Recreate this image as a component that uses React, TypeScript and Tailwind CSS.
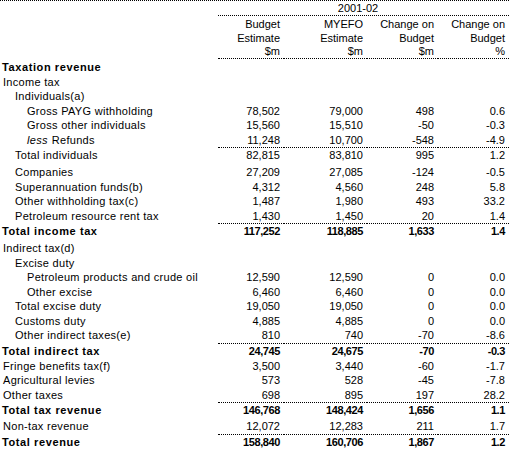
import React from "react";

type Row = {
  label: string;
  less?: boolean;
  indent?: 0 | 1 | 2;
  bold?: boolean;
  vals?: string[];
  line?: boolean;
  after?: string;
};

const rows: Row[] = [
  { label: "Taxation revenue", bold: true },
  { label: "Income tax" },
  { label: "Individuals(a)", indent: 1 },
  { label: "Gross PAYG withholding", indent: 2, vals: ["78,502", "79,000", "498", "0.6"] },
  { label: "Gross other individuals", indent: 2, vals: ["15,560", "15,510", "-50", "-0.3"] },
  { label: "Refunds", less: true, indent: 2, vals: ["11,248", "10,700", "-548", "-4.9"] },
  { label: "Total individuals", indent: 1, vals: ["82,815", "83,810", "995", "1.2"], line: true, after: "mb-[3px]" },
  { label: "Companies", indent: 1, vals: ["27,209", "27,085", "-124", "-0.5"] },
  { label: "Superannuation funds(b)", indent: 1, vals: ["4,312", "4,560", "248", "5.8"] },
  { label: "Other withholding tax(c)", indent: 1, vals: ["1,487", "1,980", "493", "33.2"] },
  { label: "Petroleum resource rent tax", indent: 1, vals: ["1,430", "1,450", "20", "1.4"] },
  { label: "Total income tax", bold: true, vals: ["117,252", "118,885", "1,633", "1.4"], line: true, after: "mb-[3px]" },
  { label: "Indirect tax(d)" },
  { label: "Excise duty", indent: 1 },
  { label: "Petroleum products and crude oil", indent: 2, vals: ["12,590", "12,590", "0", "0.0"] },
  { label: "Other excise", indent: 2, vals: ["6,460", "6,460", "0", "0.0"] },
  { label: "Total excise duty", indent: 1, vals: ["19,050", "19,050", "0", "0.0"] },
  { label: "Customs duty", indent: 1, vals: ["4,885", "4,885", "0", "0.0"] },
  { label: "Other indirect taxes(e)", indent: 1, vals: ["810", "740", "-70", "-8.6"] },
  { label: "Total indirect tax", bold: true, vals: ["24,745", "24,675", "-70", "-0.3"], line: true, after: "mb-[1px]" },
  { label: "Fringe benefits tax(f)", vals: ["3,500", "3,440", "-60", "-1.7"] },
  { label: "Agricultural levies", vals: ["573", "528", "-45", "-7.8"] },
  { label: "Other taxes", vals: ["698", "895", "197", "28.2"] },
  { label: "Total tax revenue", bold: true, vals: ["146,768", "148,424", "1,656", "1.1"], line: true, after: "mb-[2px]" },
  { label: "Non-tax revenue", vals: ["12,072", "12,283", "211", "1.7"] },
  { label: "Total revenue", bold: true, vals: ["158,840", "160,706", "1,867", "1.2"], line: true },
];

const grid = "grid grid-cols-[218px_66px_83px_71px_71px]";
const indents = ["pl-[3px]", "pl-[15px]", "pl-[27px]"];

function BodyRow({ r }: { r: Row }) {
  const top = r.line ? "border-t border-dotted" : "";
  return (
    <div className={`${grid} ${r.line ? "h-[15px]" : "h-[14.5px]"} ${r.after ?? ""} ${r.bold ? "font-bold" : ""}`}>
      <div
        className={`flex items-center whitespace-nowrap ${
          r.bold ? "pl-[2px] tracking-[0.6px]" : `${indents[r.indent ?? 0]} tracking-[0.3px]`
        } ${r.line ? "border-t border-transparent" : ""}`}
      >
        {r.less ? <i className="mr-[4px]">less</i> : null}
        {r.label}
      </div>
      {[0, 1, 2, 3].map((i) => (
        <div
          key={i}
          className={`flex items-center justify-end pr-[4px] border-black ${top} ${r.bold ? "tracking-[-0.4px]" : ""}`}
        >
          {r.vals ? r.vals[i] : ""}
        </div>
      ))}
    </div>
  );
}

export default function App() {
  const heads = [
    ["Budget", "Estimate", "$m"],
    ["MYEFO", "Estimate", "$m"],
    ["Change on", "Budget", "$m"],
    ["Change on", "Budget", "%"],
  ];
  return (
    <div className="w-[509px] h-[449px] bg-white text-black text-[11px] leading-[14px] font-['Liberation_Sans',Arial,sans-serif]">
      <div className="border-t border-b border-dotted border-black">
        <div className={`${grid} h-[15px]`}>
          <div />
          <div className="col-span-4 flex items-center justify-center border-b border-dotted border-black pr-[11px]">
            2001-02
          </div>
        </div>
        <div className={`${grid} pt-[1px]`}>
          <div />
          {heads.map((h, i) => (
            <div key={i} className="flex flex-col items-end pr-[4px] border-b border-dotted border-black">
              <span className="h-[14px] flex items-center">{h[0]}</span>
              <span className="h-[13px] flex items-center">{h[1]}</span>
              <span className="h-[14px] flex items-center">{h[2]}</span>
            </div>
          ))}
        </div>
        <div className="pt-[1px]">
          {rows.map((r) => (
            <BodyRow key={r.label} r={r} />
          ))}
        </div>
      </div>
    </div>
  );
}
